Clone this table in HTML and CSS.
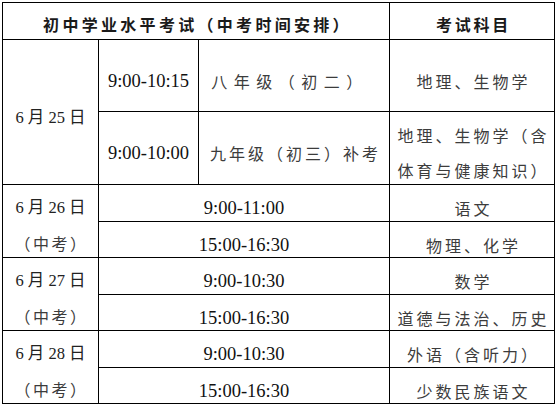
FILE: index.html
```html
<!DOCTYPE html>
<html lang="zh-CN">
<head>
<meta charset="utf-8">
<title>初中学业水平考试（中考时间安排）</title>
<link rel="stylesheet" href="styles.css">
</head>
<body>
<table class="schedule">
  <colgroup>
    <col class="c-date">
    <col class="c-time">
    <col class="c-grade">
    <col class="c-subj">
  </colgroup>
  <tr class="r-head">
    <th colspan="3" class="head head-main">初中学业水平考试（中考时间安排）</th>
    <th class="head head-subj">考试科目</th>
  </tr>
  <tr class="r-tall1">
    <td rowspan="2" class="date single">6 月 25 日</td>
    <td class="time t1">9:00-10:15</td>
    <td class="cn wide">八年级（初二）</td>
    <td class="cn">地理、生物学</td>
  </tr>
  <tr class="r-tall2">
    <td class="time">9:00-10:00</td>
    <td class="cn">九年级（初三）补考</td>
    <td class="cn two"><span class="ln">地理、生物学（含</span><span class="ln">体育与健康知识）</span></td>
  </tr>
  <tr class="r-a">
    <td rowspan="2" class="date pair"><span class="ln">6 月 26 日</span><span class="ln cn-ln">（中考）</span></td>
    <td colspan="2" class="time">9:00-11:00</td>
    <td class="cn">语文</td>
  </tr>
  <tr class="r-b">
    <td colspan="2" class="time">15:00-16:30</td>
    <td class="cn">物理、化学</td>
  </tr>
  <tr class="r-a">
    <td rowspan="2" class="date pair"><span class="ln">6 月 27 日</span><span class="ln cn-ln">（中考）</span></td>
    <td colspan="2" class="time">9:00-10:30</td>
    <td class="cn">数学</td>
  </tr>
  <tr class="r-b">
    <td colspan="2" class="time">15:00-16:30</td>
    <td class="cn">道德与法治、历史</td>
  </tr>
  <tr class="r-a">
    <td rowspan="2" class="date pair"><span class="ln">6 月 28 日</span><span class="ln cn-ln">（中考）</span></td>
    <td colspan="2" class="time">9:00-10:30</td>
    <td class="cn">外语（含听力）</td>
  </tr>
  <tr class="r-b">
    <td colspan="2" class="time">15:00-16:30</td>
    <td class="cn">少数民族语文</td>
  </tr>
</table>
</body>
</html>
```

FILE: styles.css
```css
html, body {
  margin: 0;
  padding: 0;
  background: #ffffff;
}

.schedule {
  margin: 2px 0 0 2px;
  width: 553px;
  table-layout: fixed;
  border-collapse: separate;
  border-spacing: 0;
  border-left: 1px solid #000;
  border-top: 1px solid #000;
  font-family: "Noto Sans CJK SC", sans-serif;
  font-size: 16px;
  color: #3c3c3c;
}

.c-date { width: 96px; }
.c-time { width: 100px; }
.c-grade { width: 191px; }
.c-subj { width: 165px; }

.schedule th,
.schedule td {
  box-sizing: border-box;
  border-right: 1px solid #000;
  border-bottom: 1px solid #000;
  padding: 10px 0 0 0;
  text-align: center;
  vertical-align: middle;
  line-height: 22px;
  white-space: nowrap;
}

.r-head { height: 37px; }
.r-tall1 { height: 72px; }
.r-tall2 { height: 73px; }
.r-a { height: 37px; }
.r-b { height: 36px; }

.schedule .head {
  padding-top: 6px;
  font-weight: 700;
  color: #1a1a1a;
}

.schedule .head-main {
  letter-spacing: 3.3px;
  padding-left: 3px;
}

.schedule .head-subj {
  letter-spacing: 2.7px;
  padding-left: 3px;
}

.schedule .cn {
  letter-spacing: 3px;
  padding-left: 3px;
}

.schedule .wide {
  letter-spacing: 6.5px;
  padding-left: 0;
  padding-right: 8px;
}

.schedule .time {
  font-family: "Liberation Serif", "Times New Roman", serif;
  font-size: 18.5px;
  color: #111;
}

.schedule .t1 {
  padding-top: 11px;
}

.schedule .date {
  font-family: "Liberation Serif", "Noto Sans CJK SC", serif;
  font-size: 16.5px;
  color: #222;
}

.schedule .single {
  padding-top: 12px;
}

.schedule .pair {
  vertical-align: top;
  padding-top: 12px;
}

.ln {
  display: block;
  line-height: 22px;
}

.pair .ln + .ln {
  margin-top: 13px;
}

.cn-ln {
  font-family: "Noto Sans CJK SC", sans-serif;
  font-size: 16px;
  letter-spacing: 2.5px;
  padding-left: 2px;
  color: #3c3c3c;
}

.schedule .two {
  vertical-align: top;
  padding-top: 12px;
}

.two .ln + .ln {
  margin-top: 13px;
}
```
